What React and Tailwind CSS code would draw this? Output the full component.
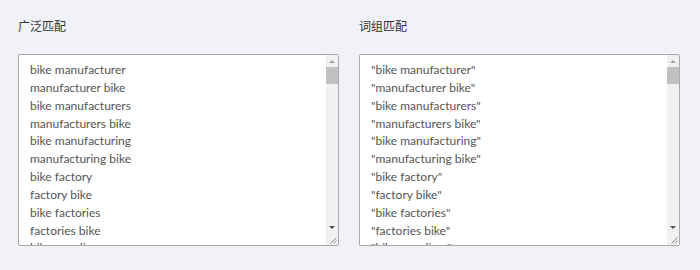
const broad = [
  "bike manufacturer",
  "manufacturer bike",
  "bike manufacturers",
  "manufacturers bike",
  "bike manufacturing",
  "manufacturing bike",
  "bike factory",
  "factory bike",
  "bike factories",
  "factories bike",
  "bike suppliers",
];

function ScrollBar() {
  return (
    <div className="w-[12px] h-full bg-[#f1f1f1] flex flex-col items-center">
      <div className="h-[12px] flex items-center justify-center">
        <div className="w-0 h-0 border-l-[3px] border-r-[3px] border-b-[3px] border-l-transparent border-r-transparent border-b-[#a3a3a3]" />
      </div>
      <div className="w-full h-[17px] bg-[#c1c1c1]" />
      <div className="flex-1" />
      <div className="h-[12px] flex items-center justify-center">
        <div className="w-0 h-0 border-l-[3px] border-r-[3px] border-t-[3px] border-l-transparent border-r-transparent border-t-[#505050]" />
      </div>
      <div className="h-[12px] w-full flex items-end justify-end pr-[1px] pb-[1px]">
        <svg width="7" height="7" viewBox="0 0 7 7">
          <path d="M6.5 0.5 L0.5 6.5 M6.5 3.5 L3.5 6.5" stroke="#8a8a8a" strokeWidth="1" />
        </svg>
      </div>
    </div>
  );
}

function Box({ title, items }) {
  return (
    <div className="w-[321px] flex flex-col">
      <div className="h-[16px] leading-[16px] text-[12px] text-[#333] mb-[19px]">{title}</div>
      <div className="h-[192px] bg-white border border-[#a9a9a9] rounded-[2px] flex overflow-hidden">
        <div className="flex-1 pt-[6px] pl-[11px] text-[12px] leading-[17.85px] text-[#555] overflow-hidden">
          {items.map((t) => (
            <div key={t} className="whitespace-nowrap">{t}</div>
          ))}
        </div>
        <ScrollBar />
      </div>
    </div>
  );
}

export default function App() {
  return (
    <div
      className="w-[700px] h-[270px] bg-[#f0f2f7] pt-[19px] pl-[18px] flex gap-[20px]"
      style={{ fontFamily: "Lato, 'Noto Sans CJK SC', sans-serif" }}
    >
      <Box title="广泛匹配" items={broad} />
      <Box title="词组匹配" items={broad.map((t) => `"${t}"`)} />
    </div>
  );
}
